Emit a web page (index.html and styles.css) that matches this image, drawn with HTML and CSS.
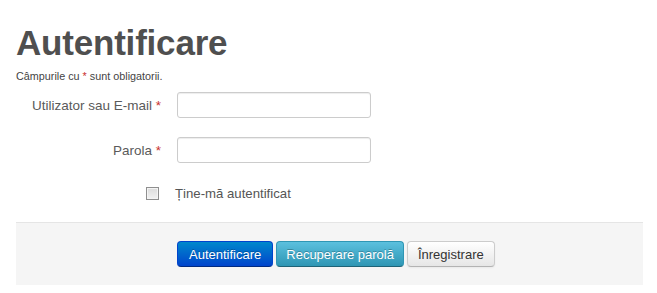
FILE: index.html
```html
<!DOCTYPE html>
<html lang="ro">
<head>
<meta charset="utf-8">
<title>Autentificare</title>
<link rel="stylesheet" href="styles.css">
</head>
<body>
<div class="page">
  <h1 class="title">Autentificare</h1>
  <p class="note">Câmpurile cu <span class="star">*</span> sunt obligatorii.</p>
  <form class="form">
    <div class="row">
      <label class="label" for="user">Utilizator sau E-mail <span class="star">*</span></label>
      <input class="input" id="user" type="text">
    </div>
    <div class="row row-last">
      <label class="label" for="pass">Parola <span class="star">*</span></label>
      <input class="input" id="pass" type="password">
    </div>
    <div class="check-row">
      <span class="box"></span>
      <span class="check-label">Ține-mă autentificat</span>
    </div>
    <div class="actions">
      <button type="button" class="btn btn-primary">Autentificare</button>
      <button type="button" class="btn btn-info">Recuperare parolă</button>
      <button type="button" class="btn btn-default">Înregistrare</button>
    </div>
  </form>
</div>
</body>
</html>
```

FILE: styles.css
```css
html, body {
  margin: 0;
  padding: 0;
  background: #ffffff;
}
body {
  font-family: "Liberation Sans", Arial, sans-serif;
  color: #555555;
  font-size: 13px;
}
.page {
  padding: 0 14px 0 16px;
}
.title {
  margin: 0;
  padding-top: 22px;
  font-size: 35px;
  line-height: 42px;
  font-weight: bold;
  color: #4f4f4f;
  letter-spacing: -0.2px;
}
.note {
  margin: 5px 0 0 0;
  font-size: 10.8px;
  line-height: 14px;
  color: #444;
}
.star {
  color: #c9302c;
}
.form {
  margin-top: 9px;
}
.row {
  display: flex;
  align-items: center;
  height: 26px;
  margin-bottom: 19px;
}
.row-last {
  margin-bottom: 22px;
}
.label {
  width: 145px;
  text-align: right;
  padding-right: 16px;
  font-size: 13.5px;
  color: #5a5a5a;
}
.input {
  box-sizing: border-box;
  width: 194px;
  height: 26px;
  margin: 0;
  border: 1px solid #cccccc;
  border-radius: 3px;
  box-shadow: inset 0 1px 1px rgba(0,0,0,0.075);
  background: #fff;
}
.check-row {
  display: flex;
  align-items: center;
  height: 16px;
  padding-left: 130px;
}
.box {
  box-sizing: border-box;
  width: 13px;
  height: 13px;
  border: 1px solid #8f8f8f;
  background: linear-gradient(#dcdcdc, #f2f2f2);
  box-shadow: inset 0 0 0 1px #f4f4f4;
}
.check-label {
  margin-left: 16px;
  font-size: 13.2px;
  color: #555;
}
.actions {
  margin-top: 21px;
  box-sizing: border-box;
  height: 63px;
  background: #f5f5f5;
  border-top: 1px solid #e5e5e5;
  padding: 18px 0 0 161px;
  display: flex;
  align-items: flex-start;
  gap: 3px;
}
.btn {
  box-sizing: border-box;
  height: 26px;
  padding: 0 11px;
  font-family: "Liberation Sans", Arial, sans-serif;
  font-size: 13px;
  border-radius: 4px;
  border: 1px solid;
  cursor: pointer;
}
.btn-primary {
  color: #fff;
  background: linear-gradient(#0088cc, #0044cc);
  border-color: #0044cc #0044cc #002a80;
  text-shadow: 0 -1px 0 rgba(0,0,0,0.25);
}
.btn-info {
  padding: 0 9px;
  color: #fff;
  background: linear-gradient(#5bc0de, #2f96b4);
  border-color: #2f96b4 #2f96b4 #1f6377;
  text-shadow: 0 -1px 0 rgba(0,0,0,0.25);
}
.btn-default {
  padding: 0 10px;
  color: #333;
  background: linear-gradient(#ffffff, #e6e6e6);
  border-color: #cccccc #cccccc #b3b3b3;
  box-shadow: inset 0 1px 0 rgba(255,255,255,0.2), 0 1px 2px rgba(0,0,0,0.05);
}
```
